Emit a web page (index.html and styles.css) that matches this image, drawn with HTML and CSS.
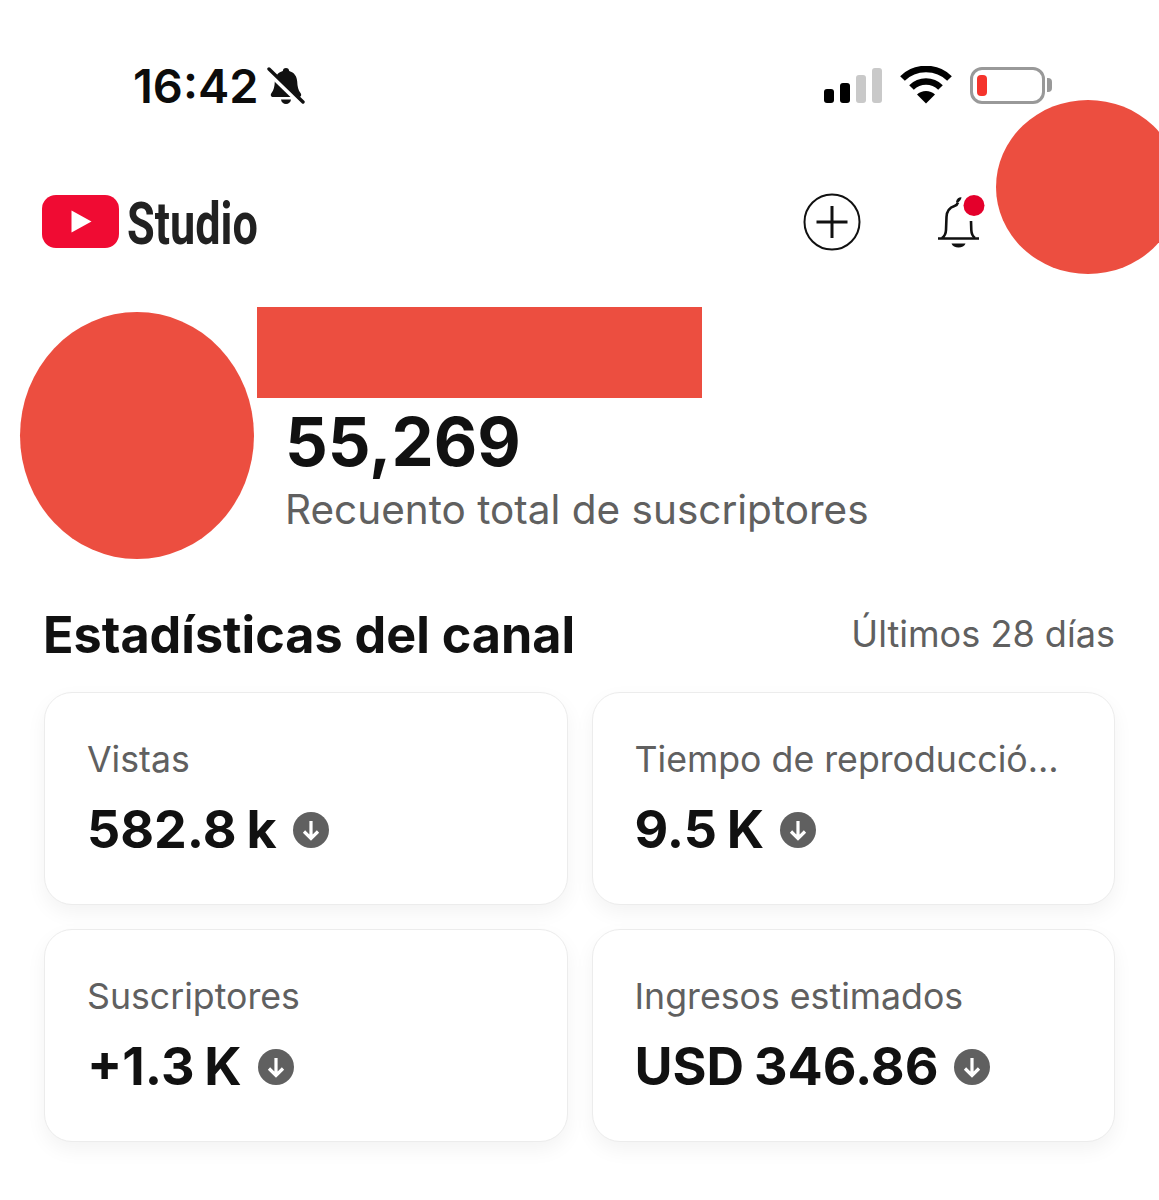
FILE: index.html
```html
<!DOCTYPE html>
<html lang="en">
<head>
    <meta charset="UTF-8">
    <meta name="viewport" content="width=device-width, initial-scale=1.0">
    <title>YouTube Studio</title>
    <link rel="stylesheet" href="styles.css">
</head>
<body>
    <div class="status-bar">
        <div class="status-left">
            <span class="clock">16:42</span>
            <svg class="muted-bell" width="38" height="40" viewBox="0 0 38 40">
                <path d="M19 2c2 0 3 1.200 3.200 3 5 1.400 7.800 5.500 8 10.500.2 5 1 8.500 3.300 11.500 1.400 1.800.6 4-1.800 4H6.300c-2.400 0-3.200-2.200-1.800-4 2.300-3 3.100-6.500 3.300-11.500.2-5 3-9.100 8-10.500C16 3.200 17 2 19 2z" fill="#111"/>
                <path d="M14 33.500h10c-.4 2.800-2.400 4.500-5 4.500s-4.600-1.700-5-4.500z" fill="#111"/>
                <path d="M2 6l33 32" stroke="#fff" stroke-width="6"/>
                <path d="M2 3l34 33" stroke="#111" stroke-width="3.400" stroke-linecap="round"/>
            </svg>
        </div>
        <div class="status-right">
            <div class="signal">
                <span class="bar bar-1"></span>
                <span class="bar bar-2"></span>
                <span class="bar bar-3 off"></span>
                <span class="bar bar-4 off"></span>
            </div>
            <svg class="wifi" width="52" height="38" viewBox="0 0 52 38">
                <path d="M2.500 12.500C8.500 6.500 17 3 26 3s17.500 3.500 23.500 9.500" fill="none" stroke="#000" stroke-width="6.600"/>
                <path d="M11.500 21.500C15.300 17.800 20.500 15.500 26 15.500s10.700 2.300 14.500 6" fill="none" stroke="#000" stroke-width="6.600"/>
                <path d="M17 28.500c2.300-2.200 5.600-3.500 9-3.500s6.700 1.300 9 3.500L26 37.500z" fill="#000"/>
            </svg>
            <div class="battery">
                <div class="battery-body"><span class="battery-level"></span></div>
                <span class="battery-cap"></span>
            </div>
        </div>
    </div>

    <div class="redact-corner"></div>

    <div class="top-bar">
        <div class="logo">
            <svg width="77" height="53" viewBox="0 0 77 53">
                <rect width="77" height="53" rx="14" fill="#f00b33"/>
                <path d="M29.500 15.500v22l20-11z" fill="#fff"/>
            </svg>
            <span class="logo-text">Studio</span>
        </div>
        <div class="top-actions">
            <svg width="58" height="58" viewBox="0 0 58 58">
                <circle cx="29" cy="29" r="27.500" fill="none" stroke="#111" stroke-width="2"/>
                <path d="M29 13v32M13.500 29h31" stroke="#111" stroke-width="3"/>
            </svg>
            <svg class="bell" width="50" height="56" viewBox="0 0 50 56">
                <path d="M2 44.500h41M6 44c3-2 3.800-4 4-8l.5-13c.3-6 3-9.500 8-11 2-.6 3-2 3.500-3.500" fill="none" stroke="#111" stroke-width="2.600"/>
                <path d="M39 44c-3-2-3.500-4-3.700-8l-.3-9" fill="none" stroke="#111" stroke-width="2.600"/>
                <path d="M20 7.500c.8-3 3-4.500 5.500-4.300-.2 2.300-2 4.800-4.500 5.500z" fill="#111"/>
                <path d="M15.500 49.500h14c-.8 2.500-3.800 4-7 4s-6.200-1.500-7-4z" fill="#111"/>
                <circle cx="38" cy="11.500" r="10.500" fill="#e4002b"/>
            </svg>
        </div>
    </div>

    <div class="channel">
        <div class="redact-avatar"></div>
        <div class="channel-info">
            <div class="redact-name"></div>
            <div class="sub-count">55,269</div>
            <div class="sub-label">Recuento total de suscriptores</div>
        </div>
    </div>

    <div class="stats">
        <div class="stats-head">
            <h2>Estadísticas del canal</h2>
            <span class="stats-period">Últimos 28 días</span>
        </div>
        <div class="stats-grid">
            <div class="card">
                <div class="card-label">Vistas</div>
                <div class="card-value">582.8 k
                    <svg class="down" width="36" height="36" viewBox="0 0 36 36"><circle cx="18" cy="18" r="18" fill="#606060"/><path d="M18 9v17M11 19.500l7 7 7-7" fill="none" stroke="#fff" stroke-width="3.200"/></svg>
                </div>
            </div>
            <div class="card">
                <div class="card-label">Tiempo de reproducció…</div>
                <div class="card-value">9.5 K
                    <svg class="down" width="36" height="36" viewBox="0 0 36 36"><circle cx="18" cy="18" r="18" fill="#606060"/><path d="M18 9v17M11 19.500l7 7 7-7" fill="none" stroke="#fff" stroke-width="3.200"/></svg>
                </div>
            </div>
            <div class="card">
                <div class="card-label">Suscriptores</div>
                <div class="card-value">+1.3 K
                    <svg class="down" width="36" height="36" viewBox="0 0 36 36"><circle cx="18" cy="18" r="18" fill="#606060"/><path d="M18 9v17M11 19.500l7 7 7-7" fill="none" stroke="#fff" stroke-width="3.200"/></svg>
                </div>
            </div>
            <div class="card">
                <div class="card-label">Ingresos estimados</div>
                <div class="card-value">USD 346.86
                    <svg class="down" width="36" height="36" viewBox="0 0 36 36"><circle cx="18" cy="18" r="18" fill="#606060"/><path d="M18 9v17M11 19.500l7 7 7-7" fill="none" stroke="#fff" stroke-width="3.200"/></svg>
                </div>
            </div>
        </div>
    </div>
</body>
</html>
```

FILE: styles.css
```css
body {
    margin: 0;
    height: 1200px;
    overflow: hidden;
    position: relative;
    background-color: #fff;
    font-family: Inter, "Liberation Sans", sans-serif;
    color: #111;
}
.status-bar {
    display: flex;
    justify-content: space-between;
    align-items: center;
    height: 172px;
    padding: 0 107px 0 133px;
    box-sizing: border-box;
}
.status-left {
    display: flex;
    align-items: center;
    gap: 8px;
}
.clock {
    font-size: 47px;
    font-weight: 600;
    line-height: 56px;
    color: #0c0c0c;
}
.status-right {
    display: flex;
    align-items: center;
    gap: 18px;
    margin-top: -2px;
}
.signal {
    display: flex;
    align-items: flex-end;
    gap: 6px;
    height: 35px;
}
.bar {
    width: 10px;
    background-color: #000;
    border-radius: 3px;
}
.bar-1 { height: 14px; }
.bar-2 { height: 20px; }
.bar-3 { height: 28px; }
.bar-4 { height: 35px; }
.bar.off {
    background-color: #c9c9c9;
}
.battery {
    display: flex;
    align-items: center;
    gap: 2px;
}
.battery-body {
    width: 75px;
    height: 37px;
    box-sizing: border-box;
    border: 3px solid #999;
    border-radius: 12px;
    padding: 5px 4px;
    display: flex;
}
.battery-level {
    width: 10px;
    background-color: #f5342c;
    border-radius: 4px;
}
.battery-cap {
    width: 5px;
    height: 14px;
    background-color: #999;
    border-radius: 0 4px 4px 0;
}
.redact-corner {
    position: absolute;
    left: 996px;
    top: 100px;
    width: 184px;
    height: 174px;
    border-radius: 50%;
    background-color: #ec4e40;
}
.top-bar {
    display: flex;
    justify-content: space-between;
    align-items: center;
    height: 100px;
    padding: 0 173px 0 42px;
}
.logo {
    display: flex;
    align-items: center;
    gap: 8px;
    margin-top: -2px;
}
.logo-text {
    font-family: Roboto, sans-serif;
    font-size: 60px;
    font-weight: 700;
    color: #212121;
    display: inline-block;
    width: 130px;
    transform: translateY(2px) scaleX(0.75);
    transform-origin: left center;
    white-space: nowrap;
}
.top-actions {
    display: flex;
    align-items: center;
    gap: 75px;
}
.channel {
    display: flex;
    align-items: flex-start;
    padding-left: 20px;
    margin-top: 35px;
}
.redact-avatar {
    flex: none;
    width: 234px;
    height: 247px;
    margin-top: 5px;
    border-radius: 50%;
    background-color: #ec4e40;
}
.channel-info {
    margin-left: 3px;
}
.redact-name {
    width: 445px;
    height: 91px;
    background-color: #ec4e40;
}
.sub-count {
    font-size: 67px;
    font-weight: 700;
    line-height: 80px;
    margin: 4px 0 0 28px;
    color: #111;
}
.sub-label {
    font-size: 40.500px;
    line-height: 50px;
    margin: 3px 0 0 28px;
    color: #606060;
    white-space: nowrap;
}
.stats {
    padding: 0 44px;
    margin-top: 22px;
}
.stats-head {
    display: flex;
    justify-content: space-between;
    align-items: center;
    height: 106px;
}
.stats-head h2 {
    margin: 0 0 0 -1px;
    font-size: 50.300px;
    font-weight: 700;
    color: #111;
}
.stats-period {
    font-size: 36.100px;
    color: #606060;
}
.stats-grid {
    display: grid;
    grid-template-columns: 1fr 1fr;
    gap: 24px;
    margin-top: 5px;
    width: 1071px;
}
.card {
    height: 213px;
    box-sizing: border-box;
    padding: 43px 42px;
    background-color: #fff;
    border: 1px solid #ececec;
    border-radius: 28px;
    box-shadow: 0 8px 20px rgba(0,0,0,0.05);
}
.card-label {
    font-size: 35.700px;
    line-height: 46px;
    color: #606060;
    white-space: nowrap;
}
.card-value {
    display: flex;
    align-items: center;
    gap: 16px;
    margin-top: 16px;
    font-size: 52px;
    word-spacing: -2.500px;
    font-weight: 700;
    line-height: 64px;
    color: #111;
    white-space: nowrap;
}
```
